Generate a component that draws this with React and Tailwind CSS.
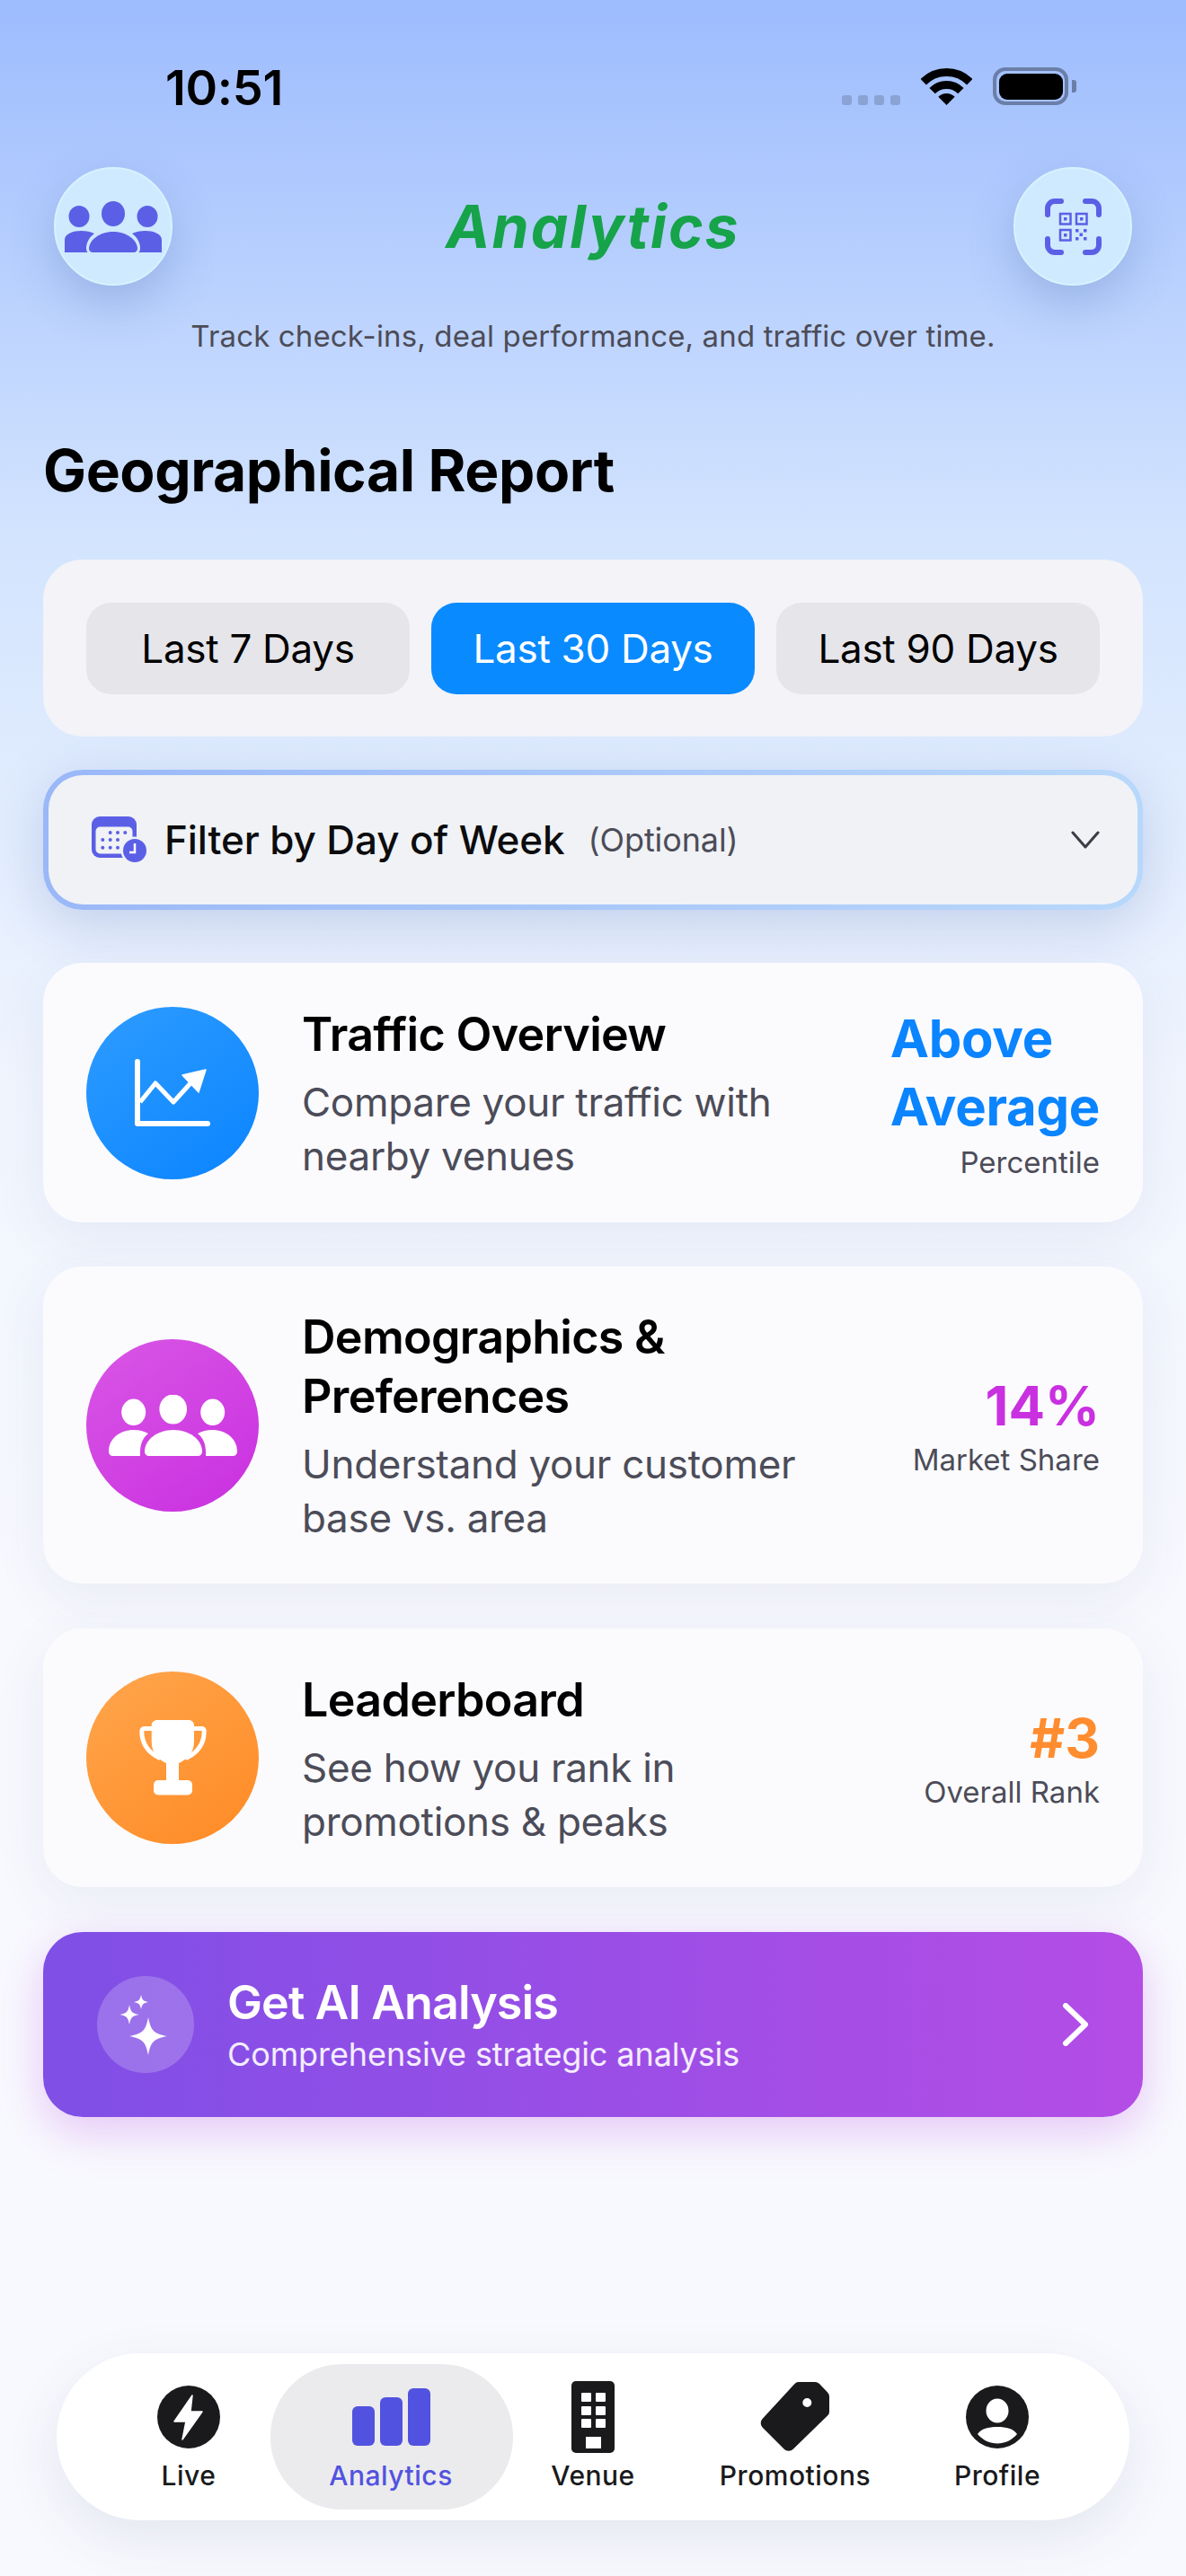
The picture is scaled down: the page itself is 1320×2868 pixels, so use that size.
const F = { fontFamily: "Inter, 'Liberation Sans', sans-serif" };

function People({ w, fill }) {
  return (
    <svg width={w} viewBox="0 0 108 57" fill={fill} className="block">
      <ellipse cx="16" cy="17" rx="11.500" ry="12" />
      <ellipse cx="54" cy="14" rx="13" ry="14" />
      <ellipse cx="92" cy="17" rx="11.500" ry="12" />
      <path d="M0 57V43C0 36 10 33 18 33C24 33 29 34 33 36C27 40 24 47 24 52C24 54 24.500 56 25.500 57Z" />
      <path d="M108 57V43C108 36 98 33 90 33C84 33 79 34 75 36C81 40 84 47 84 52C84 54 83.500 56 82.500 57Z" />
      <path d="M27 53C27 44 38 34 54 34C70 34 81 44 81 53C81 55 79 57 77 57H31C29 57 27 55 27 53Z" />
    </svg>
  );
}

function PeopleRound() {
  return (
    <svg width="143" height="68" viewBox="0 0 143 68" fill="#fff" className="block">
      <ellipse cx="27.700" cy="19.300" rx="13.500" ry="14.700" />
      <ellipse cx="71.700" cy="16" rx="15.300" ry="16.500" />
      <ellipse cx="115.700" cy="19.300" rx="13.500" ry="14.700" />
      <path d="M0 63C0 49 12 39 28 39C34 39 39 40.500 44 43C38 48 34.500 54 35 68H5C2 68 0 66 0 63Z" />
      <path d="M40 63C40 50 54 39 72 39C90 39 104 50 104 63C104 66 102 68 99 68H45C42 68 40 66 40 63Z" />
      <path d="M143 63C143 49 131 39 115 39C109 39 104 40.500 99 43C105 48 108.500 54 108 68H138C141 68 143 66 143 63Z" />
    </svg>
  );
}

function Qr() {
  const c = "#5b5fe6";
  return (
    <svg width="63" height="63" viewBox="0 0 63 63" fill="none" className="block">
      <g stroke={c} strokeWidth="6" strokeLinecap="round">
        <path d="M3 18V11C3 6.500 6.500 3 11 3H18" />
        <path d="M45 3H52C56.500 3 60 6.500 60 11V18" />
        <path d="M3 45V52C3 56.500 6.500 60 11 60H18" />
        <path d="M60 45V52C60 56.500 56.500 60 52 60H45" />
      </g>
      <g stroke={c} strokeWidth="2.500">
        <rect x="17" y="17" width="11.500" height="11.500" />
        <rect x="35" y="17" width="11.500" height="11.500" />
        <rect x="17" y="35" width="11.500" height="11.500" />
      </g>
      <g fill={c}>
        <rect x="21" y="21" width="3.500" height="3.500" />
        <rect x="39" y="21" width="3.500" height="3.500" />
        <rect x="21" y="39" width="3.500" height="3.500" />
        <rect x="34" y="34" width="3.500" height="3.500" />
        <rect x="43" y="34" width="3.500" height="3.500" />
        <rect x="38.500" y="38.500" width="3.500" height="3.500" />
        <rect x="34" y="43" width="3.500" height="3.500" />
        <rect x="43" y="43" width="3.500" height="3.500" />
      </g>
    </svg>
  );
}

function Wifi() {
  return (
    <svg width="57" height="42" viewBox="0 0 57 42" className="block">
      <path d="M2.700 16.200A36.500 36.500 0 0 1 54.300 16.200" fill="none" stroke="#000" strokeWidth="9" />
      <path d="M12.600 26.100A22.500 22.500 0 0 1 44.400 26.100" fill="none" stroke="#000" strokeWidth="9" />
      <path d="M28.500 42L19.300 32.800A13 13 0 0 1 37.700 32.800Z" fill="#000" />
    </svg>
  );
}

function Calendar() {
  const dots = [[20.7, 18], [29, 18], [37.3, 18], [12.3, 26], [20.7, 26], [29, 26], [12.3, 34.7], [20.7, 34.7], [29, 34.7]];
  return (
    <svg width="62" height="52" viewBox="0 0 62 52" className="block">
      <rect x="0" y="0" width="50" height="46" rx="9" fill="#5b5fe6" />
      <rect x="4.500" y="11.500" width="41" height="30" rx="5" fill="#f0f2f5" />
      {dots.map(([x, y], i) => <circle key={i} cx={x} cy={y} r="2" fill="#5b5fe6" />)}
      <circle cx="48" cy="38" r="15.500" fill="#f0f2f5" />
      <circle cx="48" cy="38" r="13" fill="#5b5fe6" />
      <path d="M48 30V40H42" fill="none" stroke="#fff" strokeWidth="2.500" />
    </svg>
  );
}

function Chart() {
  return (
    <svg width="86" height="76" viewBox="0 0 86 76" fill="none" className="block">
      <path d="M4 3V72H82" stroke="#fff" strokeWidth="6" strokeLinecap="round" strokeLinejoin="round" />
      <path d="M7 48L24 27L44 48L64 26" stroke="#fff" strokeWidth="5" strokeLinejoin="round" />
      <path d="M54 18L80 12L72 37Z" fill="#fff" stroke="#fff" strokeWidth="1.500" strokeLinejoin="round" />
    </svg>
  );
}

function Trophy() {
  return (
    <svg width="75" height="84" viewBox="0 0 75 84" className="block">
      <path d="M15 9.500H6C4 9.500 2.800 10.500 2.800 12.500C2.800 26 10 36 22 42" fill="none" stroke="#fff" strokeWidth="5" strokeLinecap="round" />
      <path d="M60 9.500H69C71 9.500 72.200 10.500 72.200 12.500C72.200 26 65 36 53 42" fill="none" stroke="#fff" strokeWidth="5" strokeLinecap="round" />
      <path d="M20 0H55C58.500 0 61 2.500 61 6V24C61 38 52 44 44 48V67H30V48C22 44 13.700 38 13.700 24V6C13.700 2.500 16.500 0 20 0Z" fill="#fff" />
      <rect x="16" y="67" width="43" height="16.500" rx="5" fill="#fff" />
    </svg>
  );
}

function Sparkles() {
  const star = (cx, cy, r, k) =>
    `M${cx} ${cy - r}C${cx + k} ${cy - k * 2} ${cx + k * 2} ${cy - k} ${cx + r} ${cy}C${cx + k * 2} ${cy + k} ${cx + k} ${cy + k * 2} ${cx} ${cy + r}C${cx - k} ${cy + k * 2} ${cx - k * 2} ${cy + k} ${cx - r} ${cy}C${cx - k * 2} ${cy - k} ${cx - k} ${cy - k * 2} ${cx} ${cy - r}Z`;
  return (
    <svg width="60" height="68" viewBox="0 0 60 68" fill="#fff" className="block">
      <path d={star(33, 47, 21, 3)} />
      <path d={star(12, 23, 11, 1.5)} />
      <path d={star(25, 9, 8, 1.2)} />
    </svg>
  );
}

function Live() {
  return (
    <svg width="70" height="70" viewBox="0 0 70 70" className="block">
      <circle cx="35" cy="35" r="35" fill="#1a1a1c" />
      <path d="M39 11L19 40H32L28 60L50 29H37Z" fill="#fff" stroke="#fff" strokeWidth="1.500" strokeLinejoin="round" />
    </svg>
  );
}

function Bars() {
  return (
    <svg width="87" height="64" viewBox="0 0 87 64" fill="#5252e0" className="block">
      <rect x="0" y="20" width="25" height="44" rx="6" />
      <rect x="31" y="10" width="25" height="54" rx="6" />
      <rect x="62" y="0" width="25" height="64" rx="6" />
    </svg>
  );
}

function Building() {
  const wins = [13, 28, 42];
  return (
    <svg width="48" height="80" viewBox="0 0 48 80" className="block">
      <rect width="48" height="80" rx="5" fill="#1a1a1c" />
      {wins.map((y) => (
        <g key={y} fill="#fff">
          <rect x="11" y={y} width="11" height="10" rx="1" />
          <rect x="27" y={y} width="11" height="10" rx="1" />
        </g>
      ))}
      <path d="M16 62H33V75H16Z" fill="#fff" />
    </svg>
  );
}

function Tag() {
  return (
    <svg width="78" height="78" viewBox="0 0 78 78" className="block">
      <path fillRule="evenodd" d="M43 0H61C63 0 64.500 0.700 66 2L75 11.500C76.300 13 77 14.500 77 16.500V33C77 35 76 36.500 75 37.500L37 74.500C34 77.500 29.500 77.500 26.500 74.500L3 51C0 48 0 43.500 3 40.500L38 2.500C39.500 0.800 41 0 43 0ZM52.300 18A5 5 0 1 0 52.300 28A5 5 0 1 0 52.300 18Z" fill="#1a1a1c" />
    </svg>
  );
}

function Profile() {
  return (
    <svg width="70" height="70" viewBox="0 0 70 70" className="block">
      <circle cx="35" cy="35" r="35" fill="#1a1a1c" />
      <ellipse cx="35" cy="28" rx="12.500" ry="13.500" fill="#fff" />
      <path d="M13 54C17 48 25 46 35 46C45 46 53 48 57 54C51 61 43 64.500 35 64.500C27 64.500 19 61 13 54Z" fill="#fff" />
    </svg>
  );
}

function Card({ className, circle, icon, title, sub, right }) {
  return (
    <div className={`flex items-center rounded-[44px] bg-[#fbfbfe] px-12 shadow-[0_16px_60px_rgba(60,80,140,0.08)] ${className}`}>
      <div className={`flex h-[192px] w-[192px] shrink-0 items-center justify-center rounded-full ${circle}`}>{icon}</div>
      <div className="ml-12 w-[560px] shrink-0 pt-[3px] whitespace-nowrap">
        <div className="text-[52px] leading-[66px] font-semibold tracking-[-0.7px] text-black">{title}</div>
        <div className="mt-[12px] text-[44px] leading-[60px] tracking-[-0.3px] text-[#4c4c58]">{sub}</div>
      </div>
      <div className="flex-1 text-right">{right}</div>
    </div>
  );
}

function NavItem({ icon, label, active }) {
  return (
    <div className="relative flex h-full w-[225px] flex-col items-center justify-center">
      {active && <div className="absolute top-[12px] bottom-[12px] left-[-22px] right-[-23px] rounded-[80px] bg-[#ebebed]" />}
      <div className="relative flex h-[80px] items-center justify-center">{icon}</div>
      <div className={`relative mt-[5px] text-[30px] leading-[40px] font-medium tracking-[0.5px] ${active ? "text-[#5252e0]" : "text-[#1a1a1c]"}`}>{label}</div>
    </div>
  );
}

export default function App() {
  return (
    <div style={F} className="flex h-[2868px] w-[1320px] flex-col overflow-hidden bg-[linear-gradient(180deg,#9dbcfe_0%,#d3e4fe_21%,#f0f5fe_42%,#f8f9fe_62%,#f8f9fe_100%)]">
      {/* status bar */}
      <div className="flex h-[186px] shrink-0 items-start justify-between pt-[75px] pr-[122px] pl-[184px]">
        <div className="text-[54px] leading-[46px] font-semibold tracking-[-0.3px] text-black">10:51</div>
        <div className="flex items-start">
          <div className="mt-[31px] flex gap-[7px]">
            {[0, 1, 2, 3].map((i) => <div key={i} className="h-[11px] w-[11px] rounded-[3px] bg-[#8aa3d4]" />)}
          </div>
          <div className="ml-[23px]"><Wifi /></div>
          <div className="ml-[23px] flex items-center">
            <div className="flex h-[42px] w-[84px] items-center justify-center rounded-[14px] border-[4px] border-[#6b7ea8]">
              <div className="h-[29px] w-[71px] rounded-[9px] bg-black" />
            </div>
            <div className="ml-[4px] h-[14px] w-[5px] rounded-r-[3px] bg-[#6b7ea8]" />
          </div>
        </div>
      </div>

      {/* header */}
      <div className="flex shrink-0 items-center justify-between px-[60px]">
        <div className="flex h-[132px] w-[132px] items-center justify-center rounded-full border-[2px] border-[#d8f2ff] bg-[#cfe9ff] shadow-[0_20px_50px_rgba(60,90,160,0.25)]">
          <People w={108} fill="#5b5fe6" />
        </div>
        <div className="text-[66px] leading-[80px] font-bold italic tracking-[2px] text-[#16a34a]">Analytics</div>
        <div className="flex h-[132px] w-[132px] items-center justify-center rounded-full border-[2px] border-[#d8f2ff] bg-[#cfe9ff] shadow-[0_20px_50px_rgba(60,90,160,0.25)]">
          <Qr />
        </div>
      </div>

      <div className="mt-[34px] text-center text-[33px] leading-[44px] tracking-[0.14px] text-[#4c4c58]">Track check-ins, deal performance, and traffic over time.</div>

      <div className="mt-[88px] pl-[48px] text-[64px] leading-[80px] font-bold tracking-[-0.4px] text-black">Geographical Report</div>

      <div className="mx-12 mt-[59px] flex h-[197px] shrink-0 items-center gap-6 rounded-[44px] bg-[#f3f3f8] px-12">
        <div className="flex h-[102px] flex-1 items-center justify-center rounded-[28px] bg-[#e5e5ea] text-[44px] tracking-[-0.3px] text-black">Last 7 Days</div>
        <div className="flex h-[102px] flex-1 items-center justify-center rounded-[28px] bg-[#0a8aff] text-[44px] tracking-[-0.3px] text-white">Last 30 Days</div>
        <div className="flex h-[102px] flex-1 items-center justify-center rounded-[28px] bg-[#e5e5ea] text-[44px] tracking-[-0.3px] text-black">Last 90 Days</div>
      </div>

      <div className="mx-12 mt-[37px] h-[156px] shrink-0 rounded-[44px] bg-[linear-gradient(90deg,#9ab8f8,#b8d8fb)] p-[6px] shadow-[0_16px_60px_rgba(60,90,170,0.22)]">
        <div className="flex h-full items-center rounded-[38px] bg-[#f0f2f5] pr-[42px] pl-[48px]">
          <Calendar />
          <div className="ml-[19px] text-[44px] font-medium tracking-[-0.1px] text-[#0c0c0e]">Filter by Day of Week</div>
          <div className="ml-[26px] text-[36px] tracking-[-0.1px] text-[#4c4c58]">(Optional)</div>
          <svg width="32" height="20" viewBox="0 0 32 20" fill="none" className="ml-auto block">
            <path d="M2 2L16 18L30 2" stroke="#3c3c46" strokeWidth="3" strokeLinecap="round" strokeLinejoin="round" />
          </svg>
        </div>
      </div>

      <Card
        className="mx-12 mt-[59px] h-[289px] shrink-0"
        circle="bg-[linear-gradient(145deg,#2e9cff,#0a84ff)]"
        icon={<Chart />}
        title="Traffic Overview"
        sub={<>Compare your traffic with<br />nearby venues</>}
        right={
          <>
            <div className="inline-block text-left text-[58px] leading-[76px] font-bold tracking-[-0.3px] text-[#0a84ff]">Above<br />Average</div>
            <div className="mt-[2px] text-[33px] leading-[44px] text-[#4c4c58]">Percentile</div>
          </>
        }
      />
      <Card
        className="mx-12 mt-[49px] h-[353px] shrink-0"
        circle="bg-[linear-gradient(145deg,#d957e5,#c92fe0)]"
        icon={<PeopleRound />}
        title={<>Demographics &amp;<br />Preferences</>}
        sub={<>Understand your customer<br />base vs. area</>}
        right={
          <>
            <div className="text-[60px] leading-[76px] font-bold text-[#c930e0]">14%</div>
            <div className="text-[33px] leading-[44px] text-[#4c4c58]">Market Share</div>
          </>
        }
      />
      <Card
        className="mx-12 mt-[50px] h-[288px] shrink-0"
        circle="bg-[linear-gradient(145deg,#ffa64d,#ff8a24)]"
        icon={<Trophy />}
        title="Leaderboard"
        sub={<>See how you rank in<br />promotions &amp; peaks</>}
        right={
          <>
            <div className="text-[60px] leading-[76px] font-bold text-[#ff8c2e]">#3</div>
            <div className="text-[33px] leading-[44px] text-[#4c4c58]">Overall Rank</div>
          </>
        }
      />

      <div className="mx-12 mt-[50px] flex h-[206px] shrink-0 items-center rounded-[44px] bg-[linear-gradient(90deg,#7f4fe6,#b44de6)] pr-[60px] pl-[60px] shadow-[0_16px_50px_rgba(190,80,230,0.3)]">
        <div className="flex h-[108px] w-[108px] shrink-0 items-center justify-center rounded-full bg-white/20">
          <Sparkles />
        </div>
        <div className="ml-[37px]">
          <div className="text-[52px] leading-[64px] font-semibold tracking-[-0.9px] text-white">Get AI Analysis</div>
          <div className="mt-[2px] text-[36px] leading-[46px] tracking-[-0.1px] text-white/90">Comprehensive strategic analysis</div>
        </div>
        <svg width="30" height="48" viewBox="0 0 30 48" fill="none" className="ml-auto block">
          <path d="M4 3L26 24L4 45" stroke="#fff" strokeWidth="6" strokeLinecap="round" strokeLinejoin="round" />
        </svg>
      </div>

      <div className="mx-[63px] mt-[263px] flex h-[186px] shrink-0 items-center justify-center rounded-[93px] bg-white shadow-[0_20px_60px_rgba(60,70,120,0.1)]">
        <NavItem icon={<Live />} label="Live" />
        <NavItem icon={<Bars />} label="Analytics" active />
        <NavItem icon={<Building />} label="Venue" />
        <NavItem icon={<Tag />} label="Promotions" />
        <NavItem icon={<Profile />} label="Profile" />
      </div>
    </div>
  );
}
